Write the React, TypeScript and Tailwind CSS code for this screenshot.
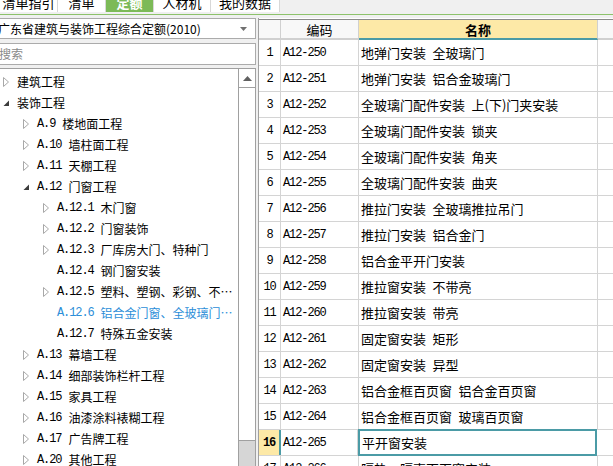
import React from "react";

type Node = { lv: number; s: "c" | "e" | "n"; code?: string; name: string; active?: boolean };

const tree: Node[] = [
  { lv: 0, s: "c", name: "建筑工程" },
  { lv: 0, s: "e", name: "装饰工程" },
  { lv: 1, s: "c", code: "A.9", name: "楼地面工程" },
  { lv: 1, s: "c", code: "A.10", name: "墙柱面工程" },
  { lv: 1, s: "c", code: "A.11", name: "天棚工程" },
  { lv: 1, s: "e", code: "A.12", name: "门窗工程" },
  { lv: 2, s: "c", code: "A.12.1", name: "木门窗" },
  { lv: 2, s: "c", code: "A.12.2", name: "门窗装饰" },
  { lv: 2, s: "c", code: "A.12.3", name: "厂库房大门、特种门" },
  { lv: 2, s: "n", code: "A.12.4", name: "钢门窗安装" },
  { lv: 2, s: "c", code: "A.12.5", name: "塑料、塑钢、彩钢、不…" },
  { lv: 2, s: "n", code: "A.12.6", name: "铝合金门窗、全玻璃门…", active: true },
  { lv: 2, s: "n", code: "A.12.7", name: "特殊五金安装" },
  { lv: 1, s: "c", code: "A.13", name: "幕墙工程" },
  { lv: 1, s: "c", code: "A.14", name: "细部装饰栏杆工程" },
  { lv: 1, s: "c", code: "A.15", name: "家具工程" },
  { lv: 1, s: "c", code: "A.16", name: "油漆涂料裱糊工程" },
  { lv: 1, s: "c", code: "A.17", name: "广告牌工程" },
  { lv: 1, s: "c", code: "A.20", name: "其他工程" },
];

const rows = [
  ["A12-250", "地弹门安装 全玻璃门"],
  ["A12-251", "地弹门安装 铝合金玻璃门"],
  ["A12-252", "全玻璃门配件安装 上(下)门夹安装"],
  ["A12-253", "全玻璃门配件安装 锁夹"],
  ["A12-254", "全玻璃门配件安装 角夹"],
  ["A12-255", "全玻璃门配件安装 曲夹"],
  ["A12-256", "推拉门安装 全玻璃推拉吊门"],
  ["A12-257", "推拉门安装 铝合金门"],
  ["A12-258", "铝合金平开门安装"],
  ["A12-259", "推拉窗安装 不带亮"],
  ["A12-260", "推拉窗安装 带亮"],
  ["A12-261", "固定窗安装 矩形"],
  ["A12-262", "固定窗安装 异型"],
  ["A12-263", "铝合金框百页窗 铝合金百页窗"],
  ["A12-264", "铝合金框百页窗 玻璃百页窗"],
  ["A12-265", "平开窗安装"],
  ["A12-266", "隔热、隔声百页窗安装"],
];

const tabs = [
  { label: "清单指引", w: "w-[58px]" },
  { label: "清单", w: "w-[48px]" },
  { label: "定额", w: "w-[48px]", active: true },
  { label: "人材机", w: "w-[57px]" },
  { label: "我的数据", w: "w-[69px]" },
];

const cjk = "font-['Noto_Sans_CJK_SC',sans-serif]";
const mono = "font-['Liberation_Mono','Noto_Sans_CJK_SC',monospace] text-[12px] tracking-[-1.1px]";

function Arrow({ s }: { s: Node["s"] }) {
  if (s === "n") return <span className="w-[14px] shrink-0" />;
  if (s === "e")
    return (
      <span className="w-[14px] shrink-0 flex items-center">
        <svg width="7" height="7" viewBox="0 0 7 7" className="mt-[2px]">
          <polygon points="6,0.5 6,6 0.5,6" fill="#3c3c3c" />
        </svg>
      </span>
    );
  return (
    <span className="w-[14px] shrink-0 flex items-center">
      <svg width="7" height="10" viewBox="0 0 7 10">
        <polygon points="0.5,0.5 5.5,5 0.5,9.5" fill="#fff" stroke="#a8a8a8" strokeWidth="1" />
      </svg>
    </span>
  );
}

export default function App() {
  return (
    <div className={`w-[613px] h-[466px] overflow-hidden bg-[#f0f0f0] ${cjk}`}>
      {/* Tabs */}
      <div className="h-[14px] overflow-hidden border-b border-[#8dc26b] box-content">
        <div className="flex h-[20px] -mt-[8px]">
          {tabs.map((t) => (
            <div
              key={t.label}
              className={`${t.w} h-full flex items-center justify-center text-[13px] leading-none border-r border-[#d8d8d8] ${
                t.active ? "bg-[#7cba57] text-white font-bold" : "bg-white text-black"
              }`}
            >
              {t.label}
            </div>
          ))}
        </div>
      </div>

      <div className="flex mt-[3px] h-[451px]">
        {/* Left panel */}
        <div className="w-[256px] flex flex-col shrink-0">
          <div className="h-[21px] bg-white border border-l-0 border-[#ababab] flex items-center justify-between">
            <span className="text-[12px] leading-none text-black -ml-[2px] whitespace-nowrap">
              广东省建筑与装饰工程综合定额(2010)
            </span>
            <svg width="7" height="4" viewBox="0 0 7 4" className="mr-[8px]">
              <polygon points="0,0 7,0 3.5,4" fill="#707070" />
            </svg>
          </div>
          <div className="h-[22px] mt-[4px] bg-white border border-l-0 border-[#ababab] flex items-center">
            <span className="text-[12px] leading-none text-[#8a8a8a] -ml-[1px]">搜索</span>
          </div>
          <div className="flex-1 mt-[3px] bg-white border-t border-r border-[#a0a0a0] flex min-h-0">
            <div className="flex-1 pt-[2px] overflow-hidden">
              {tree.map((n) => (
                <div
                  key={n.name}
                  className={`h-[21px] flex items-center whitespace-nowrap ${
                    n.lv === 0 ? "pl-[3px]" : n.lv === 1 ? "pl-[23px]" : "pl-[43px]"
                  } ${n.active ? "text-[#2c8ed8]" : "text-black"}`}
                >
                  <Arrow s={n.s} />
                  {n.code && <span className={`${mono} mr-[7px] leading-none`}>{n.code}</span>}
                  <span className="text-[12px] leading-none">{n.name}</span>
                </div>
              ))}
            </div>
            {/* Scrollbar */}
            <div className="w-[17px] flex flex-col border-l border-[#a0a0a0] bg-[#d6d6d6]">
              <div className="h-[19px] bg-white border-b border-[#a0a0a0] flex items-center justify-center">
                <svg width="9" height="5" viewBox="0 0 9 5">
                  <polygon points="4.5,0 9,5 0,5" fill="#606060" />
                </svg>
              </div>
              <div className="h-[353px] bg-white border-b border-[#a0a0a0]" />
            </div>
          </div>
        </div>

        {/* Table */}
        <div className="flex-1 ml-[2px] bg-white border-l border-[#a0a0a0] min-w-0">
          <div className="flex h-[21px] mt-[1px] border-t border-[#8a8a8a] text-[13px] leading-none">
            <div className="w-[22px] border-r border-b-2 border-[#d0d0d0] bg-[#f8f8f8]" />
            <div className="w-[78px] border-r border-b-2 border-[#d0d0d0] bg-[#f8f8f8] flex items-center justify-center">
              编码
            </div>
            <div className="w-[239px] border-r border-[#d0d0d0] border-b-2 border-b-[#4b9ba6] bg-[#fde9a7] flex items-center justify-center font-bold">
              名称
            </div>
            <div className="flex-1 border-b-2 border-[#d0d0d0] bg-[#f8f8f8]" />
          </div>
          {rows.map(([code, name], i) => {
            const sel = i === 15;
            return (
              <div key={code} className="flex h-[26px] border-b border-[#d4d4d4]">
                <div
                  className={`w-[22px] border-r flex items-center justify-center ${mono} ${
                    sel ? "bg-[#fde9a7] font-bold border-[#4b9ba6] border-r-2" : "border-[#d4d4d4]"
                  }`}
                >
                  {i + 1}
                </div>
                <div className={`w-[78px] border-r border-[#d4d4d4] flex items-center pl-[2px] ${sel ? "-ml-[1px] pl-[3px]" : ""} ${mono}`}>
                  {code}
                </div>
                <div
                  className={`w-[239px] flex items-center pl-[2px] text-[13px] leading-none whitespace-nowrap ${
                    sel ? "border-2 border-[#4b9ba6] -mt-px h-[27px]" : "border-r border-[#d4d4d4]"
                  }`}
                >
                  {name.replace(" ", "\u2002")}
                </div>
                <div className="flex-1" />
              </div>
            );
          })}
        </div>
      </div>
    </div>
  );
}
